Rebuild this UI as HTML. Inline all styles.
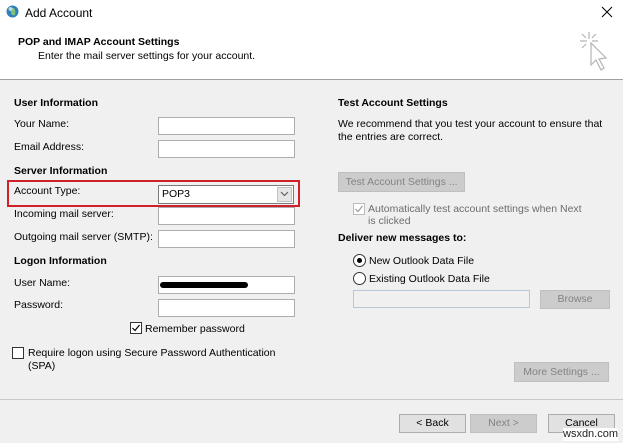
<!DOCTYPE html>
<html><head><style>
*{margin:0;padding:0;box-sizing:border-box}
body{width:623px;height:443px;overflow:hidden;background:#f0f0f0;font-family:"Liberation Sans",sans-serif;font-size:10.5px;color:#000;position:relative}
.a{position:absolute;white-space:nowrap;line-height:13px}
.b{font-weight:bold}
.in{position:absolute;background:#fff;border:1px solid #adadad}
.btn{position:absolute;background:#e1e1e1;border:1px solid #adadad;text-align:center;line-height:17px;color:#000}
.dis{background:#cccccc;border-color:#bfbfbf;color:#838383}
.cb{position:absolute;width:12px;height:12px;border:1px solid #333;background:#fff}
.rd{position:absolute;width:13px;height:13px;border:1px solid #333;border-radius:50%;background:#fff}
</style></head><body>
<div style="position:absolute;left:0;top:0;width:623px;height:80px;background:#fff;border-bottom:1px solid #a0a0a0"></div>
<svg style="position:absolute;left:6px;top:5px" width="13" height="13"><circle cx="6.5" cy="6.5" r="6" fill="#2f7fb8"/><path d="M3 3 Q6 5 5 9 Q7 11 9 10 Q10 6 8 3Z" fill="#7fc07a"/><circle cx="4.5" cy="4" r="2" fill="#cfe8f6" opacity=".8"/></svg>
<div class="a" style="left:25px;top:6px;font-size:12px;line-height:14px">Add Account</div>
<svg style="position:absolute;left:601px;top:6px" width="12" height="12"><path d="M1 1L11 11M11 1L1 11" stroke="#000" stroke-width="1"/></svg>
<div class="a b" style="left:18px;top:36px">POP and IMAP Account Settings</div>
<div class="a" style="left:38px;top:50px">Enter the mail server settings for your account.</div>
<svg style="position:absolute;left:578px;top:30px" width="34" height="48" fill="none" stroke="#b4b4b4" stroke-width="1.2"><path d="M11 2V9M2 11H9M4 4L8 8M18 4L14 8M14 11H20M4 18L8 14"/><path d="M13 13L13 35L18 30L23 40L26 38L21 29L28 28Z" fill="#fff"/></svg>
<div class="a b" style="left:14px;top:97px">User Information</div>
<div class="a" style="left:14px;top:118px">Your Name:</div>
<div class="in" style="left:158px;top:117px;width:137px;height:18px"></div>
<div class="a" style="left:14px;top:141px">Email Address:</div>
<div class="in" style="left:158px;top:140px;width:137px;height:18px"></div>
<div class="a b" style="left:14px;top:165px">Server Information</div>
<div style="position:absolute;left:7px;top:180px;width:293px;height:27px;border:2px solid #d0202a"></div>
<div class="a" style="left:14px;top:185px">Account Type:</div>
<div class="in" style="left:158px;top:185px;width:136px;height:19px;border-color:#7a7a7a"></div>
<div class="a" style="left:162px;top:188px">POP3</div>
<div style="position:absolute;left:277px;top:187px;width:15px;height:15px;background:#e5e5e5;border:1px solid #c0c0c0"></div>
<svg style="position:absolute;left:280px;top:191px" width="9" height="6"><path d="M1 1L4.5 4.5L8 1" stroke="#555" fill="none"/></svg>
<div class="a" style="left:14px;top:208px">Incoming mail server:</div>
<div class="in" style="left:158px;top:207px;width:137px;height:18px"></div>
<div class="a" style="left:14px;top:231px">Outgoing mail server (SMTP):</div>
<div class="in" style="left:158px;top:230px;width:137px;height:18px"></div>
<div class="a b" style="left:14px;top:255px">Logon Information</div>
<div class="a" style="left:14px;top:277px">User Name:</div>
<div class="in" style="left:158px;top:276px;width:137px;height:18px"></div>
<div style="position:absolute;left:160px;top:282px;width:88px;height:6px;background:#000;border-radius:3px"></div>
<div class="a" style="left:14px;top:299px">Password:</div>
<div class="in" style="left:158px;top:299px;width:137px;height:18px"></div>
<div class="cb" style="left:130px;top:322px"></div>
<svg style="position:absolute;left:131px;top:323px" width="10" height="10"><path d="M1.5 5L4 7.5L8.5 2" stroke="#000" fill="none" stroke-width="1.2"/></svg>
<div class="a" style="left:145px;top:323px">Remember password</div>
<div class="cb" style="left:12px;top:347px"></div>
<div class="a" style="left:28px;top:347px">Require logon using Secure Password Authentication</div>
<div class="a" style="left:28px;top:360px">(SPA)</div>

<div class="a b" style="left:338px;top:97px">Test Account Settings</div>
<div class="a" style="left:338px;top:118px">We recommend that you test your account to ensure that</div>
<div class="a" style="left:338px;top:131px">the entries are correct.</div>
<div class="btn dis" style="left:338px;top:172px;width:127px;height:20px;line-height:18px">Test Account Settings ...</div>
<div class="cb" style="left:353px;top:203px;border-color:#bbb"></div>
<svg style="position:absolute;left:354px;top:204px" width="10" height="10"><path d="M1.5 5L4 7.5L8.5 2" stroke="#999" fill="none" stroke-width="1.2"/></svg>
<div class="a" style="left:368px;top:203px;color:#6d6d6d">Automatically test account settings when Next</div>
<div class="a" style="left:368px;top:215px;color:#6d6d6d">is clicked</div>
<div class="a b" style="left:338px;top:232px">Deliver new messages to:</div>
<div class="rd" style="left:353px;top:254px"></div>
<div style="position:absolute;left:357px;top:258px;width:5px;height:5px;border-radius:50%;background:#000"></div>
<div class="a" style="left:369px;top:255px">New Outlook Data File</div>
<div class="rd" style="left:353px;top:272px"></div>
<div class="a" style="left:369px;top:273px">Existing Outlook Data File</div>
<div class="in" style="left:353px;top:290px;width:177px;height:18px;background:#f0f0f0;border-color:#b8c8d8"></div>
<div class="btn dis" style="left:540px;top:290px;width:70px;height:19px">Browse</div>
<div class="btn dis" style="left:514px;top:362px;width:95px;height:20px;line-height:18px">More Settings ...</div>
<div style="position:absolute;left:0;top:399px;width:623px;height:1px;background:#c8c8c8"></div>
<div class="btn" style="left:399px;top:414px;width:67px;height:19px">&lt; Back</div>
<div class="btn dis" style="left:470px;top:414px;width:67px;height:19px">Next &gt;</div>
<div class="btn" style="left:548px;top:414px;width:67px;height:19px">Cancel</div>
<div class="a" style="left:563px;top:428px;font-size:11px;color:#222;background:#fff">wsxdn.com</div>
</body></html>
